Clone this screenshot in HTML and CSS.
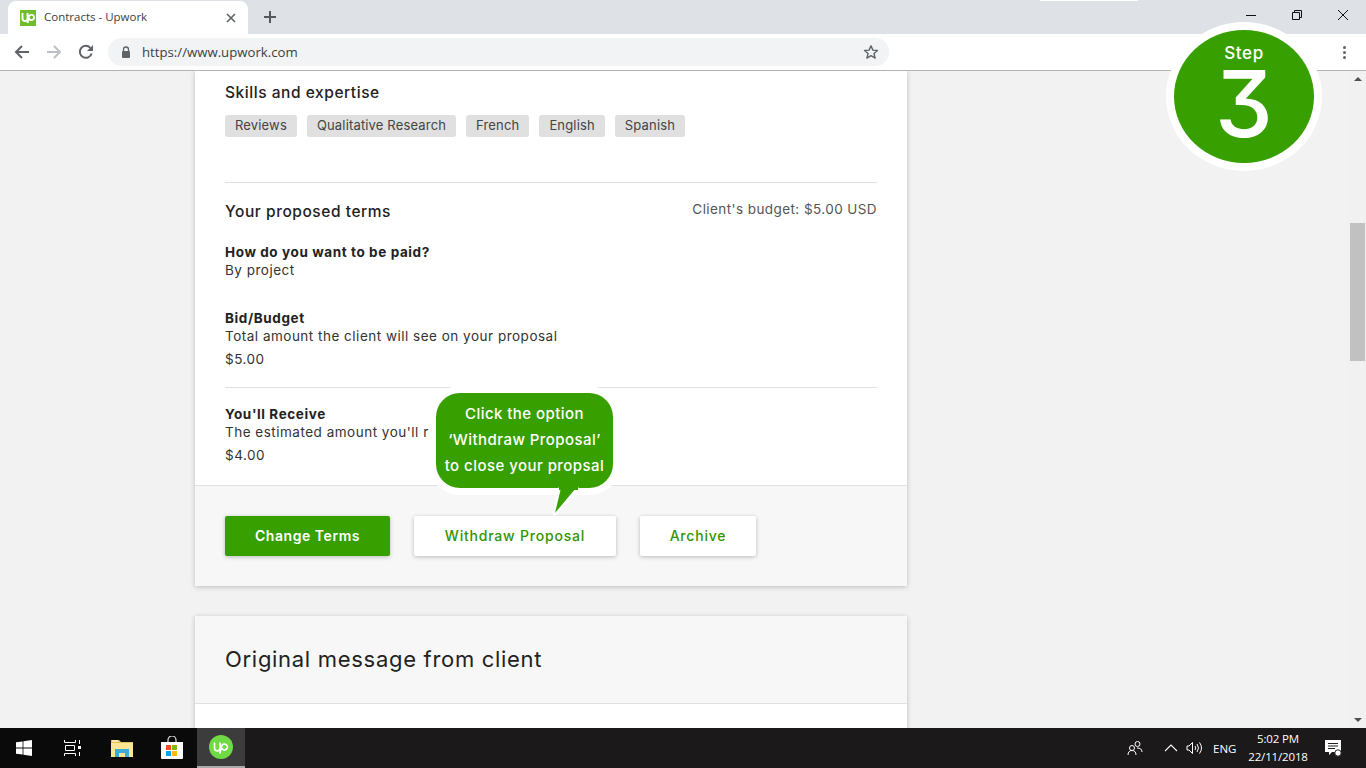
FILE: index.html
```html
<!DOCTYPE html>
<html lang="en">
<head>
<meta charset="utf-8">
<title>Contracts - Upwork</title>
<link rel="stylesheet" href="styles.css">
</head>
<body>
<div class="page">
  <header class="chrome">
    <div class="tabstrip">
      <div class="tab">
        <svg class="favicon" width="16" height="16" viewBox="4 5 16 16"><rect x="4" y="5" width="16" height="16" fill="#6fbe2c"/><path d="M6.500 8v5.500a2.500 2.500 0 0 0 5 0V8M11.500 18l1.200-6a2.700 2.700 0 1 1 .2 1.500" stroke="#fff" stroke-width="1.900" fill="none"/></svg>
        <span class="tab-title">Contracts - Upwork</span>
        <svg class="tab-close" width="10" height="10" viewBox="0 0 10 10"><path d="M1 1l8 8M9 1l-8 8" stroke="#5f6368" stroke-width="1.6" fill="none"/></svg>
      </div>
      <svg class="new-tab" width="14" height="14" viewBox="0 0 14 14"><path d="M7 1v12M1 7h12" stroke="#55585c" stroke-width="2" fill="none"/></svg>
      <div class="win-controls">
        <svg width="12" height="12" viewBox="0 0 12 12"><path d="M1 6.5h10" stroke="#111" stroke-width="1" fill="none"/></svg>
        <svg width="12" height="12" viewBox="0 0 12 12"><path d="M1.500 3.500h7v7h-7zM3.500 3.500v-2h7v7h-2" stroke="#111" stroke-width="1" fill="none"/></svg>
        <svg width="12" height="12" viewBox="0 0 12 12"><path d="M1 1l10 10M11 1L1 11" stroke="#111" stroke-width="1" fill="none"/></svg>
      </div>
    </div>
    <div class="toolbar">
      <svg class="nav-icon" width="16" height="16" viewBox="0 0 16 16"><path d="M15 8H2M8 2L2 8l6 6" stroke="#5f6368" stroke-width="2" fill="none"/></svg>
      <svg class="nav-icon" width="16" height="16" viewBox="0 0 16 16"><path d="M1 8h13M8 2l6 6-6 6" stroke="#bdc1c6" stroke-width="2" fill="none"/></svg>
      <svg class="nav-icon" width="16" height="16" viewBox="0 0 16 16"><path d="M13.600 9.500A6 6 0 1 1 12.300 3.800" stroke="#5f6368" stroke-width="2" fill="none"/><path d="M15 1v6H9z" fill="#5f6368"/></svg>
      <div class="omnibox">
        <svg width="10" height="13" viewBox="0 0 10 13"><path d="M2.500 5V3.500a2.500 2.500 0 0 1 5 0V5" stroke="#5f6368" stroke-width="1.300" fill="none"/><rect x="1" y="5" width="8" height="7" rx="1" fill="#5f6368"/></svg>
        <span class="url">https://www.upwork.com</span>
        <svg class="star" width="16" height="16" viewBox="0 0 16 16"><path d="M8 1.800l1.900 4.300 4.600.4-3.500 3 1.100 4.600L8 11.700l-4.100 2.400L5 9.500l-3.500-3 4.600-.4z" stroke="#5f6368" stroke-width="1.400" fill="none" stroke-linejoin="round"/></svg>
      </div>
      <span class="menu-dots"><i></i><i></i><i></i></span>
    </div>
  </header>

  <div class="viewport">
    <main class="main">
      <section class="card">
        <div class="body">
          <h3 class="skills-title">Skills and expertise</h3>
          <ul class="tags">
            <li>Reviews</li>
            <li>Qualitative Research</li>
            <li>French</li>
            <li>English</li>
            <li>Spanish</li>
          </ul>
          <hr class="rule rule-terms">
          <div class="terms-head">
            <h3>Your proposed terms</h3>
            <span class="budget">Client's budget: $5.00 USD</span>
          </div>
          <div class="block block-paid">
            <strong>How do you want to be paid?</strong>
            <p>By project</p>
          </div>
          <div class="block block-bid">
            <strong>Bid/Budget</strong>
            <p>Total amount the client will see on your proposal</p>
            <p class="amount">$5.00</p>
          </div>
          <hr class="rule rule-bid">
          <div class="block block-receive">
            <strong>You'll Receive</strong>
            <p>The estimated amount you'll r</p>
            <p class="amount">$4.00</p>
          </div>
        </div>
        <div class="actions">
          <button class="btn btn-primary">Change Terms</button>
          <button class="btn btn-withdraw">Withdraw Proposal</button>
          <button class="btn btn-archive">Archive</button>
        </div>
      </section>

      <section class="card card-message">
        <h2>Original message from client</h2>
      </section>
    </main>
    <aside class="scrollbar">
      <span class="arrow arrow-up"></span>
      <span class="thumb"></span>
      <span class="arrow arrow-down"></span>
    </aside>
  </div>

  <footer class="taskbar">
    <div class="task-left">
      <span class="task-slot">
        <svg width="16" height="16" viewBox="0 0 16 16"><path d="M0 2.300l6.600-.9v6.200H0zM7.400 1.300L16 0v7.600H7.400zM0 8.400h6.600v6.200L0 13.700zM7.400 8.400H16V16l-8.600-1.300z" fill="#fff"/></svg>
      </span>
      <span class="task-slot">
        <svg width="18" height="16" viewBox="0 0 18 16"><path d="M.5 0v2.500h11V0M.5 16v-2.500h11V16M1.500 5.500h9v5h-9zM15.500 0v4M15.500 12v4" stroke="#fff" stroke-width="1" fill="none"/><rect x="14" y="6" width="3" height="3" fill="#fff"/></svg>
      </span>
      <span class="task-slot">
        <svg width="22" height="18" viewBox="0 0 22 18"><path d="M0 1h8l2 2h12v15H0z" fill="#e8c262"/><path d="M0 4h22v14H0z" fill="#fde68f"/><path d="M4 18v-8h14v8h-4v-4H8v4z" fill="#3fa9dc"/><path d="M1 1h6v2H1z" fill="#fbe8a8"/></svg>
      </span>
      <span class="task-slot">
        <svg width="24" height="24" viewBox="0 0 24 24"><path d="M8 7V4a4 4 0 0 1 8 0v3" stroke="#ddd" stroke-width="1.200" fill="none"/><path d="M1 6h22v16a1 1 0 0 1-1 1H2a1 1 0 0 1-1-1z" fill="#fff"/><rect x="6" y="9" width="5" height="5" fill="#f1501f"/><rect x="12" y="9" width="5" height="5" fill="#7eb900"/><rect x="6" y="15" width="5" height="5" fill="#00a3ee"/><rect x="12" y="15" width="5" height="5" fill="#ffb900"/></svg>
      </span>
      <span class="task-slot task-active">
        <svg width="24" height="24" viewBox="0 0 24 24"><circle cx="12" cy="12" r="12" fill="#6fda44"/><path d="M5.500 7.500v5.500a2.800 2.800 0 0 0 5.600 0V7.500M10.800 18.500l1.700-7a3 3 0 1 1 .2 1.700" stroke="#fff" stroke-width="1.700" fill="none"/></svg>
      </span>
    </div>
    <div class="tray">
      <svg class="tray-people" width="16" height="16" viewBox="0 0 16 16"><circle cx="5" cy="8" r="2.500" stroke="#fff" fill="none"/><path d="M1 15c0-3 1.500-4.500 4-4.500S9 12 9 15" stroke="#fff" fill="none"/><circle cx="10.500" cy="4" r="2.500" stroke="#fff" fill="none"/><path d="M10 8c3 0 5 1 5 4" stroke="#fff" fill="none"/></svg>
      <svg class="tray-chev" width="14" height="8" viewBox="0 0 14 8"><path d="M1 7l6-6 6 6" stroke="#fff" stroke-width="1.100" fill="none"/></svg>
      <svg class="tray-vol" width="17" height="14" viewBox="0 0 17 14"><path d="M1 5h2l3.500-3.500v11L3 9H1z" stroke="#fff" fill="none"/><path d="M9 5q1.500 2 0 4M11 3q3 4 0 8M13.500 1.500q4 5.500 0 11" stroke="#fff" fill="none"/></svg>
      <span class="tray-lang">ENG</span>
      <span class="clock"><span>5:02 PM</span><span>22/11/2018</span></span>
      <svg class="tray-note" width="17" height="17" viewBox="0 0 17 17"><path d="M0 0h16v12H7l-3 3v-3H0z" fill="#fff"/><path d="M3 3.500h10M3 6h10M3 8.500h7" stroke="#222" fill="none"/><circle cx="13" cy="13" r="3.200" fill="#fff" stroke="#222"/></svg>
    </div>
  </footer>

  <div class="top-sliver"></div>

  <div class="step-badge">
    <span class="step-word">Step</span>
    <span class="step-num">3</span>
  </div>

  <div class="callout">
    <span>Click the option</span>
    <span>‘Withdraw Proposal’</span>
    <span>to close your propsal</span>
    <svg class="callout-tail" width="32" height="32" viewBox="0 0 32 32"><path d="M11 0h15L5 25z" fill="#37a000" stroke="#fff" stroke-width="5" paint-order="stroke" stroke-linejoin="round"/><path d="M9-6h19v8H9z" fill="#37a000"/></svg>
  </div>
</div>
</body>
</html>
```

FILE: styles.css
```css
* { box-sizing: border-box; }
html, body { margin: 0; padding: 0; }
body { font-family: Inter, "Liberation Sans", sans-serif; color: #222; overflow: hidden; }
.page { position: relative; width: 1366px; height: 768px; display: flex; flex-direction: column; background: #f2f2f2; overflow: hidden; }

/* browser chrome */
.chrome { flex: none; height: 71px; border-bottom: 1px solid #b4b4b4; background: #fff; }
.tabstrip { height: 34px; background: #dee1e6; display: flex; align-items: flex-end; padding-left: 8px; }
.tab { width: 240px; height: 33px; background: #fff; border-radius: 8px 8px 0 0; display: flex; align-items: center; padding: 0 12px; }
.favicon { flex: none; }
.tab-title { font: 11.500px/15px "Open Sans", sans-serif; color: #3c4043; margin-left: 8px; padding-bottom: 2px; flex: 1; }
.tab-close { flex: none; }
.new-tab { margin: 0 0 10px 15px; }
.win-controls { margin-left: auto; display: flex; align-items: center; gap: 34px; height: 29px; padding: 0 17px 0 0; align-self: flex-start; }
.toolbar { height: 36px; display: flex; align-items: center; padding-left: 14px; position: relative; }
.nav-icon { flex: none; margin-right: 16px; }
.omnibox { width: 781px; height: 28px; margin-left: -2px; border-radius: 14px; background: #f1f3f4; display: flex; align-items: center; padding: 0 10px 0 13px; }
.url { font: 13.200px "Open Sans", sans-serif; color: #3c4043; margin-left: 11px; flex: 1; }
.menu-dots { display: flex; flex-direction: column; gap: 2px; margin-left: 454px; }
.menu-dots i { width: 3px; height: 3px; border-radius: 50%; background: #5f6368; display: block; }

/* page */
.viewport { flex: none; height: 657px; display: flex; overflow: hidden; }
.main { flex: 1; padding-left: 195px; }
.card { width: 712px; background: #fff; box-shadow: 0 1px 5px rgba(0,0,0,.22); }
.body { height: 415px; padding: 0 30px; border-bottom: 1px solid #e0e0e0; overflow: hidden; }
h3 { font-size: 15.500px; font-weight: 500; letter-spacing: .55px; margin: 0; color: #222; line-height: 20px; }
.skills-title { margin-top: 12px; }
.tags { list-style: none; margin: 12px 0 0; padding: 0; display: flex; gap: 10px; }
.tags li { height: 22px; padding: 0 10px; background: #e0e0e0; border-radius: 3px; font-size: 13px; line-height: 21px; color: #444; letter-spacing: .16px; }
.rule { border: 0; border-top: 1px solid #e0e0e0; margin: 0; }
.rule-terms { margin-top: 45px; }
.terms-head { display: flex; justify-content: space-between; margin-top: 19px; }
.budget { font-size: 13.500px; line-height: 14px; color: #555; letter-spacing: .42px; }
.block { font-size: 13.500px; line-height: 18px; letter-spacing: .5px; }
.block strong { display: block; font-weight: 700; color: #222; letter-spacing: .6px; }
.block p { margin: 0; color: #333; }
.block .amount { margin-top: 5px; }
.block-paid { margin-top: 21px; }
.block-bid { margin-top: 30px; }
.rule-bid { margin-top: 19px; }
.block-receive { margin-top: 17px; }
.actions { height: 100px; background: #f7f7f7; padding: 30px; display: flex; }
.btn { height: 40px; border: 0; border-radius: 2px; font: 500 14px Inter, sans-serif; letter-spacing: .8px; box-shadow: 0 1px 4px rgba(0,0,0,.25); background: #fff; color: #329500; padding: 0 0 2px; }
.btn-primary { width: 165px; background: #37a000; color: #fff; font-weight: 600; letter-spacing: .55px; }
.btn-withdraw { width: 202px; margin-left: 24px; }
.btn-archive { width: 116px; margin-left: 24px; }
.card-message { margin-top: 30px; height: 140px; }
.card-message h2 { margin: 0; height: 88px; background: #f7f7f7; border-bottom: 1px solid #e0e0e0; padding: 0 30px; font-size: 22px; font-weight: 400; line-height: 87px; color: #222; letter-spacing: .7px; }

/* scrollbar */
.scrollbar { flex: none; width: 17px; height: 657px; background: #f1f1f1; position: relative; display: flex; flex-direction: column; align-items: center; padding-top: 6px; }
.arrow { flex: none; width: 0; height: 0; border-left: 4px solid transparent; border-right: 4px solid transparent; }
.arrow-up { border-bottom: 4px solid #505050; }
.thumb { flex: none; width: 15px; height: 138px; background: #c1c1c1; margin-top: 142px; }
.arrow-down { border-top: 4px solid #505050; margin-top: auto; margin-bottom: 6px; }

/* taskbar */
.taskbar { flex: none; height: 40px; display: flex; justify-content: space-between; background: linear-gradient(90deg, #0a0a0a 0, #0a0a0a 197px, #1b1919 245px, #1b1919 100%); color: #fff; }
.task-left { display: grid; grid-template-columns: 48px 49px 50px 50px 48px; }
.task-slot { height: 40px; display: flex; align-items: center; justify-content: center; }
.task-active { background: #3c3c3c; border-bottom: 2px solid #aaa; }
.tray { display: flex; align-items: center; font: 12px "Open Sans", sans-serif; }
.tray-chev { margin-left: 21px; }
.tray-vol { margin-left: 8px; }
.tray-lang { margin-left: 10px; width: 30px; font-size: 11.500px; }
.clock { display: flex; flex-direction: column; align-items: center; line-height: 18px; width: 70px; font-size: 11.500px; letter-spacing: -.15px; }
.tray-note { margin: 0 24px 0 12px; }

/* overlays */
.top-sliver { position: absolute; left: 1040px; top: 0; width: 98px; height: 1px; background: #fff; }
.step-badge { position: absolute; left: 1174px; top: 30px; width: 140px; height: 133px; border-radius: 50%; background: #37a000; box-shadow: 0 0 0 8px #fff; color: #fff; display: flex; flex-direction: column; align-items: center; }
.step-word { font-size: 17px; font-weight: 500; line-height: 20px; margin-top: 13px; letter-spacing: .6px; }
.step-num { font-size: 92px; font-weight: 500; line-height: 80px; margin-top: 1px; font-feature-settings: "cv09"; }
.callout { position: absolute; left: 436px; top: 393px; width: 177px; height: 95px; padding-top: 8px; border-radius: 24px; background: #37a000; box-shadow: 0 0 0 7px #fff; color: #fff; font-size: 15px; font-weight: 450; line-height: 26px; text-align: center; display: flex; flex-direction: column; letter-spacing: .45px; white-space: nowrap; }
.callout-tail { position: absolute; left: 114px; top: 95px; overflow: visible; }
```
